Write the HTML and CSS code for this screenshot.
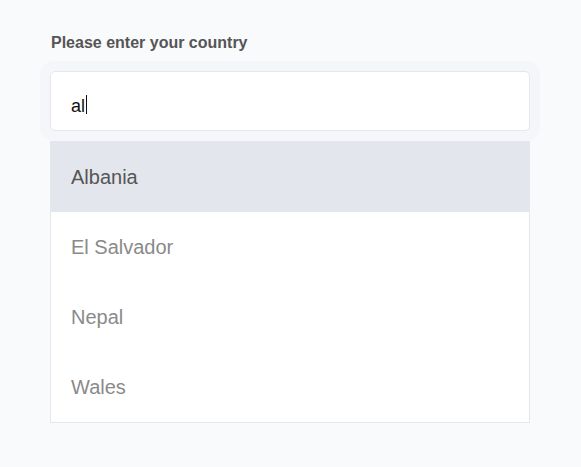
FILE: index.html
```html
<!DOCTYPE html>
<html lang="en">
<head>
<meta charset="utf-8">
<title>Country autocomplete</title>
<link rel="stylesheet" href="styles.css">
</head>
<body>
<div class="field">
  <label class="label">Please enter your country</label>
  <div class="input" role="textbox">al<span class="caret"></span></div>
  <ul class="list">
    <li class="item active">Albania</li>
    <li class="item">El Salvador</li>
    <li class="item">Nepal</li>
    <li class="item">Wales</li>
  </ul>
</div>
</body>
</html>
```
FILE: styles.css
```css
html, body {
  margin: 0;
  padding: 0;
  background: #f9fafc;
  font-family: "Liberation Sans", Arial, sans-serif;
}
.field {
  width: 480px;
  padding: 34px 0 0 50px;
  display: flex;
  flex-direction: column;
}
.label {
  font-size: 16px;
  font-weight: bold;
  color: #555;
  line-height: 18px;
  margin: 0 0 19px 1px;
}
.input {
  box-sizing: border-box;
  height: 60px;
  border: 1px solid #e3e7ee;
  border-radius: 5px;
  background: #fff;
  box-shadow: 0 0 0 10px #f4f6f9;
  padding: 24px 20px 0;
  font-size: 18px;
  line-height: 21px;
  color: #111;
  display: flex;
  align-items: flex-start;
}
.caret {
  display: inline-block;
  width: 1px;
  height: 19px;
  background: #111;
  margin: -1px 0 0 1px;
}
.list {
  list-style: none;
  margin: 10px 0 0;
  padding: 0;
  border: 1px solid #e3e7ee;
  background: #fff;
}
.item {
  height: 70px;
  display: flex;
  align-items: center;
  padding: 0 20px;
  font-size: 20px;
  color: #8a8a8a;
}
.item.active {
  background: #e3e7ed;
  color: #555;
}
```
